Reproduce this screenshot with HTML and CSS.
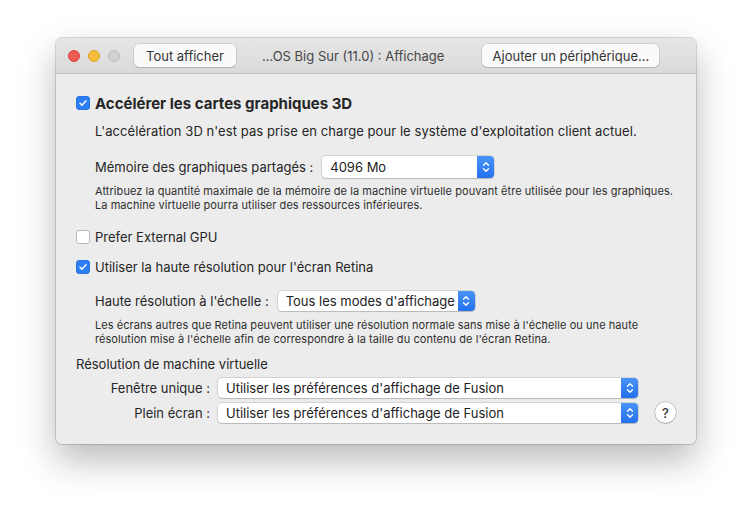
FILE: index.html
```html
<!DOCTYPE html>
<html lang="fr">
<head>
  <meta charset="UTF-8">
  <meta name="viewport" content="width=device-width, initial-scale=1.0">
  <title>Affichage</title>
  <link rel="stylesheet" href="styles.css">
</head>
<body>

  <div class="window">
    <!-- Title bar -->
    <div class="titlebar">
      <div class="lights">
        <span class="light red"></span>
        <span class="light yellow"></span>
        <span class="light gray"></span>
      </div>
      <button class="tb-button show-all">Tout afficher</button>
      <div class="title">...OS Big Sur (11.0) : Affichage</div>
      <button class="tb-button add-device">Ajouter un périphérique...</button>
    </div>

    <div class="content">
      <label class="check-row main-check">
        <span class="checkbox checked">
          <svg viewBox="0 0 14 14"><path d="M3.5 7.3l2.3 2.4 4.7-5.4" /></svg>
        </span>
        Accélérer les cartes graphiques 3D
      </label>

      <div class="indent">
        <p class="desc">L'accélération 3D n'est pas prise en charge pour le système d'exploitation client actuel.</p>

        <div class="field-row memory-row">
          <span class="field-label">Mémoire des graphiques partagés :</span>
          <div class="select memory-select">
            <span class="select-value">4096 Mo</span>
            <span class="stepper">
              <svg viewBox="0 0 10 16"><path d="M2.5 6.2L5 3.7l2.5 2.5M2.5 9.8L5 12.3l2.5-2.5" /></svg>
            </span>
          </div>
        </div>

        <p class="hint hint-memory">Attribuez la quantité maximale de la mémoire de la machine virtuelle pouvant être utilisée pour les graphiques.<br>La machine virtuelle pourra utiliser des ressources inférieures.</p>
      </div>

      <label class="check-row gpu-check">
        <span class="checkbox"></span>
        Prefer External GPU
      </label>

      <label class="check-row retina-check">
        <span class="checkbox checked">
          <svg viewBox="0 0 14 14"><path d="M3.5 7.3l2.3 2.4 4.7-5.4" /></svg>
        </span>
        Utiliser la haute résolution pour l'écran Retina
      </label>

      <div class="indent">
        <div class="field-row scale-row">
          <span class="field-label">Haute résolution à l'échelle :</span>
          <div class="select scale-select">
            <span class="select-value">Tous les modes d'affichage</span>
            <span class="stepper">
              <svg viewBox="0 0 10 16"><path d="M2.5 6.2L5 3.7l2.5 2.5M2.5 9.8L5 12.3l2.5-2.5" /></svg>
            </span>
          </div>
        </div>

        <p class="hint hint-scale">Les écrans autres que Retina peuvent utiliser une résolution normale sans mise à l'échelle ou une haute<br>résolution mise à l'échelle afin de correspondre à la taille du contenu de l'écran Retina.</p>
      </div>

      <div class="section-title">Résolution de machine virtuelle</div>

      <div class="res-grid">
        <span class="grid-label">Fenêtre unique :</span>
        <div class="select wide-select">
          <span class="select-value">Utiliser les préférences d'affichage de Fusion</span>
          <span class="stepper">
            <svg viewBox="0 0 10 16"><path d="M2.5 6.2L5 3.7l2.5 2.5M2.5 9.8L5 12.3l2.5-2.5" /></svg>
          </span>
        </div>
        <span></span>

        <span class="grid-label">Plein écran :</span>
        <div class="select wide-select">
          <span class="select-value">Utiliser les préférences d'affichage de Fusion</span>
          <span class="stepper">
            <svg viewBox="0 0 10 16"><path d="M2.5 6.2L5 3.7l2.5 2.5M2.5 9.8L5 12.3l2.5-2.5" /></svg>
          </span>
        </div>
        <button class="help-button">?</button>
      </div>
    </div>
  </div>

</body>
</html>
```

FILE: styles.css
```css
body {
  margin: 0;
  width: 752px;
  height: 519px;
  background: #fff;
  font-family: Inter, 'Noto Sans', sans-serif;
  color: #262626;
  overflow: hidden;
}

.window {
  margin: 38px 0 0 56px;
  width: 640px;
  height: 406px;
  box-sizing: border-box;
  background: #ececec;
  border-radius: 6px;
  box-shadow: 0 0 0 1px rgba(0,0,0,0.14), 0 16px 36px rgba(0,0,0,0.28);
  overflow: hidden;
}

/* Title bar */
.titlebar {
  display: flex;
  align-items: center;
  height: 35px;
  padding-left: 12px;
  background: linear-gradient(to bottom, #e6e6e6, #dadada);
  border-bottom: 1px solid #c3c3c3;
}

.lights {
  display: flex;
  gap: 8px;
}

.light {
  width: 12px;
  height: 12px;
  border-radius: 50%;
  box-sizing: border-box;
}

.light.red { background: #ee5b55; border: 0.5px solid #d8463f; }
.light.yellow { background: #f6bd3b; border: 0.5px solid #dda42e; }
.light.gray { background: #d0d0d0; border: 0.5px solid #bdbdbd; }

.tb-button {
  font-family: inherit;
  font-size: 13px;
  color: #333;
  background: #fafafa;
  border: none;
  border-radius: 5px;
  box-shadow: 0 0 0 0.5px rgba(0,0,0,0.16), 0 1px 1px rgba(0,0,0,0.12);
  padding: 0;
  height: 23px;
}

.show-all {
  width: 102px;
  margin-left: 14px;
}

.title {
  margin-left: 26px;
  font-size: 13px;
  color: #474747;
}

.add-device {
  width: 177px;
  margin-left: 38px;
}

/* Content */
.content {
  padding: 19px 0 0 20px;
}

.check-row {
  display: flex;
  align-items: center;
  gap: 5px;
  font-size: 13px;
  height: 18px;
}

.main-check {
  font-size: 15px;
  font-weight: 700;
  height: 20px;
}

.gpu-check { margin-top: 16px; }
.retina-check { margin-top: 12px; }

.checkbox {
  width: 14px;
  height: 14px;
  box-sizing: border-box;
  border-radius: 3px;
  background: #fff;
  border: 1px solid #b8b8b8;
  flex-shrink: 0;
  display: flex;
}

.checkbox.checked {
  background: #2d7ef5;
  border-color: #2a72dd;
}

.checkbox svg {
  width: 12px;
  height: 12px;
  fill: none;
  stroke: #fff;
  stroke-width: 1.7;
  stroke-linecap: round;
  stroke-linejoin: round;
}

.indent {
  margin-left: 19px;
}

.desc {
  margin: 10px 0 0;
  font-size: 13px;
  line-height: 16px;
  letter-spacing: 0.07px;
}

.field-row {
  display: flex;
  align-items: center;
  gap: 9px;
  font-size: 13px;
}

.memory-row { margin-top: 17px; }
.scale-row { margin-top: 15px; }

.select {
  display: flex;
  align-items: center;
  height: 21px;
  box-sizing: border-box;
  background: #fff;
  border-radius: 4px;
  box-shadow: 0 0 0 0.5px rgba(0,0,0,0.22), 0 1px 1px rgba(0,0,0,0.12);
  font-size: 13px;
  color: #222;
}

.select-value {
  flex: 1;
  padding-left: 8px;
}

.stepper {
  width: 17px;
  height: 100%;
  border-radius: 0 4px 4px 0;
  background: linear-gradient(to bottom, #4a93f8, #2371f0);
  display: flex;
  align-items: center;
  justify-content: center;
}

.stepper svg {
  width: 10px;
  height: 16px;
  fill: none;
  stroke: #fff;
  stroke-width: 1.4;
  stroke-linecap: round;
  stroke-linejoin: round;
}

.memory-select { width: 172px; height: 22px; }
.scale-select { width: 197px; height: 20px; }

.hint {
  margin: 0;
  font-size: 11px;
  line-height: 14px;
  letter-spacing: 0.06px;
  color: #2e2e2e;
}

.hint-memory { margin-top: 6px; }
.hint-scale { margin-top: 7px; }

.section-title {
  margin-top: 10px;
  font-size: 13px;
  line-height: 16px;
}

.res-grid {
  display: grid;
  grid-template-columns: 134px 420px auto;
  column-gap: 8px;
  row-gap: 4px;
  align-items: center;
  margin-top: 6px;
  font-size: 13px;
}

.grid-label {
  text-align: right;
}

.wide-select { height: 20px; }

.help-button {
  width: 21px;
  height: 21px;
  margin-left: 9px;
  padding: 0;
  border: none;
  border-radius: 50%;
  background: #fff;
  box-shadow: 0 0 0 0.5px rgba(0,0,0,0.25), 0 1px 1px rgba(0,0,0,0.15);
  font-family: inherit;
  font-size: 13px;
  font-weight: 500;
  color: #333;
}
```
